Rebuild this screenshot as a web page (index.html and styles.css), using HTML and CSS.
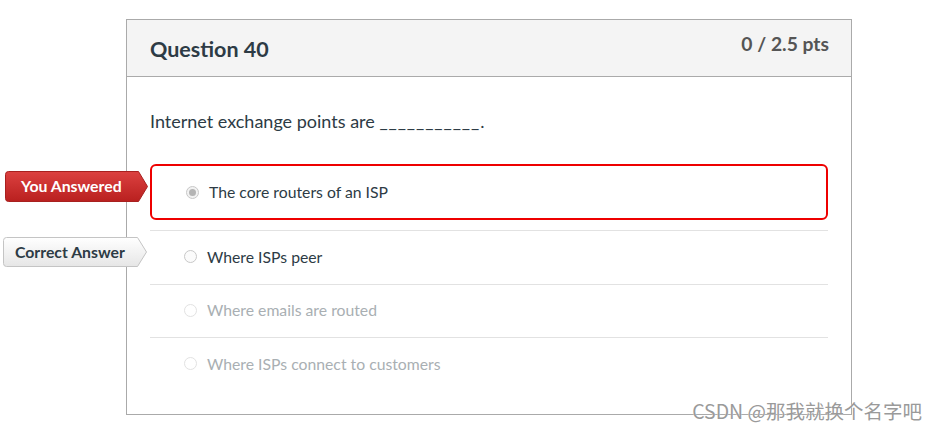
FILE: index.html
```html
<!DOCTYPE html>
<html>
<head>
<meta charset="utf-8">
<link rel="stylesheet" href="styles.css">
</head>
<body>
<div class="page">
  <div class="card">
    <div class="card-header">
      <h2 class="title">Question 40</h2>
      <div class="pts">0 / 2.5 pts</div>
    </div>
    <div class="card-body">
      <p class="question">Internet exchange points are <span class="blank">___________</span>.</p>
      <div class="answers">
        <div class="answer selected">
          <span class="radio checked"></span>
          <span class="answer-text">The core routers of an ISP</span>
        </div>
        <div class="answer">
          <span class="radio"></span>
          <span class="answer-text">Where ISPs peer</span>
        </div>
        <div class="answer dim short">
          <span class="radio"></span>
          <span class="answer-text">Where emails are routed</span>
        </div>
        <div class="answer dim">
          <span class="radio"></span>
          <span class="answer-text">Where ISPs connect to customers</span>
        </div>
      </div>
    </div>
  </div>

  <div class="tag tag-you">
    <svg class="tag-shape" width="144" height="32" viewBox="0 0 144 32">
      <defs>
        <linearGradient id="gr" x1="0" y1="0" x2="0" y2="1">
          <stop offset="0" stop-color="#dc4140"/>
          <stop offset="1" stop-color="#b9201f"/>
        </linearGradient>
      </defs>
      <path d="M3.5 0.5 H133.5 L142.5 15.5 L133.5 30.5 H3.5 Q0.5 30.5 0.5 27.5 V3.5 Q0.5 0.5 3.5 0.5 Z" fill="url(#gr)" stroke="#a8201f"/>
    </svg>
    <span class="tag-text">You Answered</span>
  </div>

  <div class="tag tag-correct">
    <svg class="tag-shape" width="145" height="31" viewBox="0 0 145 31">
      <defs>
        <linearGradient id="gg" x1="0" y1="0" x2="0" y2="1">
          <stop offset="0" stop-color="#ffffff"/>
          <stop offset="1" stop-color="#e6e6e6"/>
        </linearGradient>
      </defs>
      <path d="M3.5 0.5 H134.5 L143.5 15 L134.5 29.5 H3.5 Q0.5 29.5 0.5 26.5 V3.5 Q0.5 0.5 3.5 0.5 Z" fill="url(#gg)" stroke="#c4c4c4"/>
    </svg>
    <span class="tag-text">Correct Answer</span>
  </div>

  <div class="watermark">CSDN @那我就换个名字吧</div>
</div>
</body>
</html>
```
FILE: styles.css
```css
html, body {
  margin: 0;
  padding: 0;
  background: #ffffff;
}

.page {
  position: relative;
  width: 938px;
  height: 430px;
  overflow: hidden;
  font-family: Lato, "Noto Sans", sans-serif;
  color: #2d3b45;
}

.card {
  margin: 19px 0 0 126px;
  width: 726px;
  box-sizing: border-box;
  border: 1px solid #aaaaaa;
  background: #ffffff;
}

.card-header {
  height: 57px;
  box-sizing: border-box;
  background: #f4f4f4;
  border-bottom: 1px solid #aaaaaa;
  display: flex;
  justify-content: space-between;
  align-items: flex-start;
  padding: 0 22px 0 23px;
}

.title {
  margin: 15px 0 0 0;
  font-size: 21.5px;
  line-height: 28px;
  font-weight: 700;
  color: #2d3b45;
}

.pts {
  margin-top: 12px;
  font-size: 19.3px;
  line-height: 24px;
  font-weight: 700;
  color: #555555;
}

.card-body {
  padding: 31px 23px 23px 23px;
}

.question {
  margin: 0 0 30px 0;
  font-size: 18px;
  line-height: 26px;
  color: #2d3b45;
}

.blank {
  letter-spacing: 0.9px;
}

.answers {
  display: flex;
  flex-direction: column;
}

.answer {
  display: flex;
  align-items: center;
  height: 54px;
  box-sizing: border-box;
  border-top: 1px solid #e2e2e2;
  padding-left: 34px;
  padding-bottom: 2px;
  font-size: 15.75px;
  color: #2d3b45;
}

.answer.short {
  height: 53px;
}

.answer.selected {
  height: 56px;
  border: 2px solid #ee0000;
  border-radius: 6px;
  margin-bottom: 10px;
  padding-left: 34px;
  padding-bottom: 0;
}

.answer.dim {
  color: #a9afb3;
}

.radio {
  width: 11px;
  height: 11px;
  border-radius: 50%;
  border: 1px solid #c8c8c8;
  background: #fbfbfb;
  margin-right: 10px;
  flex: none;
  position: relative;
}

.answer.dim .radio {
  border-color: #e2e2e2;
  background: #ffffff;
}

.radio.checked {
  border-color: #c8c8c8;
  background: #f2f2f2;
}

.radio.checked::after {
  content: "";
  position: absolute;
  left: 2px;
  top: 2px;
  width: 7px;
  height: 7px;
  border-radius: 50%;
  background: #b4b4b4;
}

.answer-text {
  line-height: 20px;
}

.tag {
  position: absolute;
  display: flex;
  align-items: center;
}

.tag-shape {
  position: absolute;
  left: 0;
  top: 0;
}

.tag-text {
  position: relative;
  font-size: 15.8px;
  font-weight: 700;
  line-height: 20px;
}

.tag-you {
  left: 5px;
  top: 171px;
  width: 144px;
  height: 31px;
}

.tag-you .tag-text {
  color: #ffffff;
  padding-left: 16px;
  margin-top: -1px;
}

.tag-correct {
  left: 3px;
  top: 237px;
  width: 145px;
  height: 30px;
}

.tag-correct .tag-text {
  color: #2d3b45;
  padding-left: 12px;
  margin-top: -1px;
}

.watermark {
  position: absolute;
  right: 16px;
  top: 398px;
  font-family: "Noto Sans CJK SC", "Noto Sans", sans-serif;
  font-size: 19.5px;
  line-height: 26px;
  color: #9a9a9a;
  text-shadow: 0 0 1px #ffffff;
}
```
